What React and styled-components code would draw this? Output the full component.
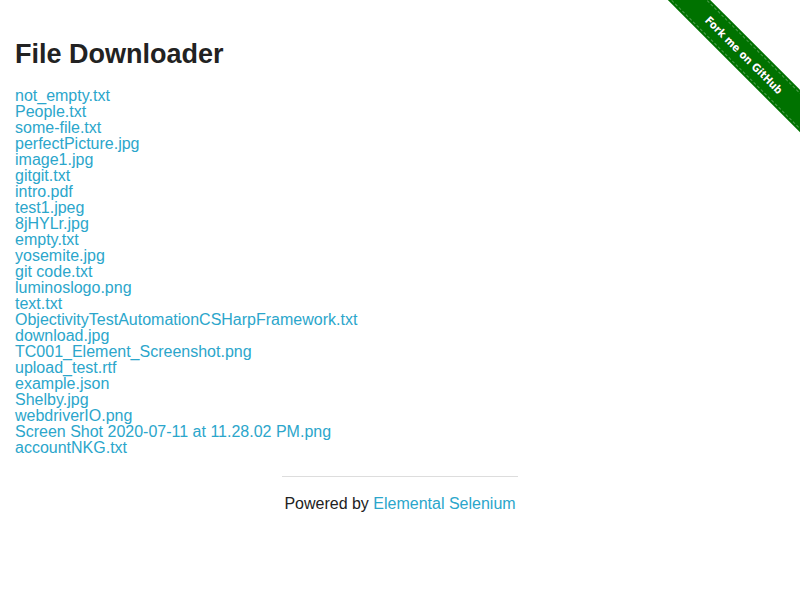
import React from "react";
import styled, { createGlobalStyle } from "styled-components";

const Global = createGlobalStyle`
  html, body { margin: 0; padding: 0; background: #fff; }
  body {
    font-family: "Liberation Sans", Arial, Helvetica, sans-serif;
    color: #222;
    font-size: 16px;
    line-height: 1;
  }
`;

const Page = styled.div`
  position: relative;
  width: 100%;
`;

const Content = styled.div`
  padding: 0 15px;
`;

const Heading = styled.h3`
  margin: 0;
  padding-top: 39px;
  padding-bottom: 19px;
  font-size: 27px;
  line-height: 30px;
  font-weight: bold;
  color: #222;
`;

const FileList = styled.div`
  display: flex;
  flex-direction: column;
  align-items: flex-start;
`;

const FileLink = styled.a`
  color: #2ba6cb;
  text-decoration: none;
  font-size: 16px;
  line-height: 16px;
  white-space: pre;
`;

const Footer = styled.div`
  width: 33.3333%;
  margin: 0 auto;
  padding: 0 15px;
  box-sizing: border-box;
`;

const Rule = styled.hr`
  border: 0;
  border-top: 1px solid #ddd;
  margin: 20px 0 19px;
  height: 0;
`;

const Powered = styled.div`
  text-align: center;
  font-size: 16px;
  line-height: 16px;
  color: #222;
`;

const Link = styled.a`
  color: #2ba6cb;
  text-decoration: none;
`;

const RibbonWrap = styled.div`
  position: absolute;
  top: 0;
  right: 0;
  width: 149px;
  height: 149px;
  overflow: hidden;
`;

const Ribbon = styled.a`
  position: absolute;
  left: -27px;
  top: 40px;
  width: 240px;
  height: 30px;
  box-sizing: border-box;
  background: #007200;
  transform: rotate(45deg);
  display: flex;
  align-items: center;
  justify-content: center;
  color: #fff;
  font-family: "DejaVu Sans Condensed", "DejaVu Sans", sans-serif;
  font-stretch: condensed;
  font-weight: bold;
  font-size: 11px;
  text-decoration: none;
  text-shadow: 0 0 1px rgba(0, 0, 0, 0.5);

  &::before {
    content: "";
    position: absolute;
    left: 0;
    right: 0;
    top: 2px;
    bottom: 2px;
    border-top: 1px dashed rgba(255, 255, 255, 0.3);
    border-bottom: 1px dashed rgba(255, 255, 255, 0.3);
  }
`;

const files = [
  "not_empty.txt",
  "People.txt",
  "some-file.txt",
  "perfectPicture.jpg",
  "image1.jpg",
  "gitgit.txt",
  "intro.pdf",
  "test1.jpeg",
  "8jHYLr.jpg",
  "empty.txt",
  "yosemite.jpg",
  "git code.txt",
  "luminoslogo.png",
  "text.txt",
  "ObjectivityTestAutomationCSHarpFramework.txt",
  "download.jpg",
  "TC001_Element_Screenshot.png",
  "upload_test.rtf",
  "example.json",
  "Shelby.jpg",
  "webdriverIO.png",
  "Screen Shot 2020-07-11 at 11.28.02 PM.png",
  "accountNKG.txt",
];

export default function App() {
  return (
    <Page>
      <Global />
      <RibbonWrap>
        <Ribbon href="#">Fork me on GitHub</Ribbon>
      </RibbonWrap>
      <Content>
        <Heading>File Downloader</Heading>
        <FileList>
          {files.map((f) => (
            <FileLink key={f} href="#">
              {f}
            </FileLink>
          ))}
        </FileList>
      </Content>
      <Footer>
        <Rule />
        <Powered>
          Powered by <Link href="#">Elemental Selenium</Link>
        </Powered>
      </Footer>
    </Page>
  );
}
